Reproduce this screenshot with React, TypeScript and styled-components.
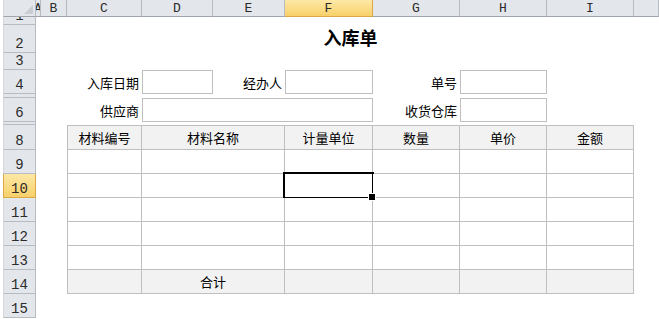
import React from 'react';
import styled, { createGlobalStyle, css } from 'styled-components';

const GlobalStyle = createGlobalStyle`
  * {
    box-sizing: border-box;
  }
  body {
    margin: 0;
    background: #ffffff;
    overflow: hidden;
    font-family: "Noto Sans CJK SC", "Noto Sans", sans-serif;
  }
`;

const LINE = '#bfbfbf';
const HEAD_LINE = '#b7bcc2';

const Sheet = styled.div`
  display: grid;
  padding-left: 3px;
  grid-template-columns: 33px 5px 26px 75px 71px 72px 88px 87px 87px 87px 1fr;
  grid-template-rows: 17px 8px 28px 17px 24px 4px 24px 3px 25px repeat(7, 24px);
  width: 659px;
  height: 319px;
  overflow: hidden;
`;

const headSelected = css`
  background: linear-gradient(#fde8a6, #f8d06a);
  border-color: #dca948;
`;

const Corner = styled.div`
  grid-column: 1;
  grid-row: 1;
  background: #e3e6ea;
  border-right: 1px solid ${HEAD_LINE};
  border-bottom: 1px solid #9fa5ac;
  border-left: 1px solid #d4d8dc;
  display: flex;
  align-items: flex-end;
  justify-content: flex-end;
  padding: 0 2px 2px 0;
`;

const ColHeader = styled.div<{ $selected?: boolean }>`
  grid-row: 1;
  background: #e3e6ea;
  border-right: 1px solid ${HEAD_LINE};
  border-bottom: 1px solid #9fa5ac;
  font-family: "Liberation Mono", "DejaVu Sans Mono", monospace;
  font-size: 13px;
  color: #2b2b2b;
  display: flex;
  align-items: center;
  justify-content: center;
  overflow: hidden;
  white-space: nowrap;
  ${p => p.$selected && headSelected}
`;

const RowHeader = styled.div<{ $selected?: boolean }>`
  grid-column: 1;
  background: #e3e6ea;
  border-right: 1px solid ${HEAD_LINE};
  border-bottom: 1px solid ${HEAD_LINE};
  border-left: 1px solid #d4d8dc;
  font-family: "Liberation Mono", "DejaVu Sans Mono", monospace;
  font-size: 14px;
  line-height: 13px;
  color: #2b2b2b;
  display: flex;
  align-items: flex-end;
  justify-content: center;
  padding-bottom: 1px;
  overflow: hidden;
  ${p => p.$selected && headSelected}
`;

const Title = styled.div`
  grid-column: 4 / 11;
  grid-row: 3;
  display: flex;
  align-items: center;
  justify-content: center;
  font-size: 18px;
  font-weight: 700;
  color: #000;
  padding-bottom: 4px;
`;

const Label = styled.div<{ $col: number; $row: number }>`
  grid-column: ${p => p.$col};
  grid-row: ${p => p.$row};
  display: flex;
  align-items: center;
  justify-content: flex-end;
  padding-right: 3px;
  font-size: 13px;
  color: #000;
  white-space: nowrap;
`;

const Box = styled.div<{ $col: string; $row: number }>`
  grid-column: ${p => p.$col};
  grid-row: ${p => p.$row};
  border: 1px solid ${LINE};
  background: #fff;
`;

const Table = styled.div`
  grid-column: 4 / 11;
  grid-row: 9 / 16;
  display: grid;
  grid-template-columns: 75px 143px 88px 87px 87px 87px;
  grid-template-rows: 25px repeat(6, 24px);
`;

const TCell = styled.div<{ $shade?: boolean; $first?: boolean; $top?: boolean; $selected?: boolean }>`
  position: relative;
  border-right: 1px solid ${LINE};
  border-bottom: 1px solid ${LINE};
  border-left: ${p => (p.$first ? `1px solid ${LINE}` : 'none')};
  border-top: ${p => (p.$top ? `1px solid ${LINE}` : 'none')};
  background: ${p => (p.$shade ? '#f2f2f2' : '#ffffff')};
  display: flex;
  align-items: center;
  justify-content: center;
  font-size: 13px;
  color: #000;
  white-space: nowrap;
  ${p =>
    p.$selected &&
    css`
      &::after {
        content: '';
        position: absolute;
        left: -2px;
        top: -2px;
        right: -2px;
        bottom: -2px;
        border: 2px solid #000;
      }
      &::before {
        content: '';
        position: absolute;
        right: -4px;
        bottom: -4px;
        width: 6px;
        height: 6px;
        background: #000;
        border: 1px solid #fff;
        z-index: 2;
      }
    `}
`;

const columns = ['A', 'B', 'C', 'D', 'E', 'F', 'G', 'H', 'I', ''];
const rows = [1, 2, 3, 4, 5, 6, 7, 8, 9, 10, 11, 12, 13, 14, 15];
const tableHead = ['材料编号', '材料名称', '计量单位', '数量', '单价', '金额'];

const App: React.FC = () => {
  return (
    <>
      <GlobalStyle />
      <Sheet>
        <Corner>
          <svg width="9" height="9" viewBox="0 0 9 9">
            <polygon points="9,0 9,9 0,9" fill="#c9ced4" />
          </svg>
        </Corner>
        {columns.map((c, i) => (
          <ColHeader key={i} $selected={c === 'F'} style={{ gridColumn: i + 2 }}>
            {c}
          </ColHeader>
        ))}
        {rows.map(r => (
          <RowHeader key={r} $selected={r === 10} style={{ gridRow: r + 1 }}>
            {r === 5 || r === 7 ? '' : r}
          </RowHeader>
        ))}

        <Title>入库单</Title>

        <Label $col={4} $row={5}>入库日期</Label>
        <Box $col="5" $row={5} />
        <Label $col={6} $row={5}>经办人</Label>
        <Box $col="7" $row={5} />
        <Label $col={8} $row={5}>单号</Label>
        <Box $col="9" $row={5} />

        <Label $col={4} $row={7}>供应商</Label>
        <Box $col="5 / 8" $row={7} />
        <Label $col={8} $row={7}>收货仓库</Label>
        <Box $col="9" $row={7} />

        <Table>
          {tableHead.map((h, i) => (
            <TCell key={h} $shade $top $first={i === 0}>
              {h}
            </TCell>
          ))}
          {[9, 10, 11, 12, 13].map(r =>
            tableHead.map((_, i) => (
              <TCell key={`${r}-${i}`} $first={i === 0} $selected={r === 10 && i === 2} />
            ))
          )}
          {tableHead.map((_, i) => (
            <TCell key={`t-${i}`} $shade $first={i === 0}>
              {i === 1 ? '合计' : ''}
            </TCell>
          ))}
        </Table>
      </Sheet>
    </>
  );
};

export default App;
